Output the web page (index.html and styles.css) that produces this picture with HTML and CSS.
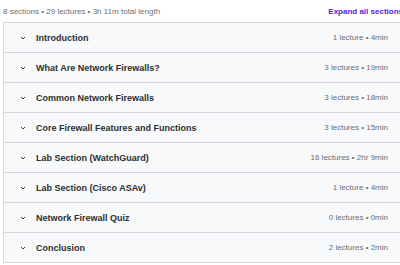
FILE: index.html
```html
<!DOCTYPE html>
<html>
<head>
<meta charset="utf-8">
<link rel="stylesheet" href="styles.css">
</head>
<body>
<div class="curriculum">
  <div class="summary">
    <span class="stats">8 sections • 29 lectures • 3h 11m total length</span>
    <span class="expand">Expand all sections</span>
  </div>
  <div class="sections">
    <div class="row"><span class="chev"><svg width="8" height="8" viewBox="0 0 8 8"><path d="M2 3 L4 5 L6 3" fill="none" stroke="#3e4143" stroke-width="1"/></svg></span><span class="title">Introduction</span><span class="meta">1 lecture • 4min</span></div>
    <div class="row"><span class="chev"><svg width="8" height="8" viewBox="0 0 8 8"><path d="M2 3 L4 5 L6 3" fill="none" stroke="#3e4143" stroke-width="1"/></svg></span><span class="title">What Are Network Firewalls?</span><span class="meta">3 lectures • 19min</span></div>
    <div class="row"><span class="chev"><svg width="8" height="8" viewBox="0 0 8 8"><path d="M2 3 L4 5 L6 3" fill="none" stroke="#3e4143" stroke-width="1"/></svg></span><span class="title">Common Network Firewalls</span><span class="meta">3 lectures • 18min</span></div>
    <div class="row"><span class="chev"><svg width="8" height="8" viewBox="0 0 8 8"><path d="M2 3 L4 5 L6 3" fill="none" stroke="#3e4143" stroke-width="1"/></svg></span><span class="title">Core Firewall Features and Functions</span><span class="meta">3 lectures • 15min</span></div>
    <div class="row"><span class="chev"><svg width="8" height="8" viewBox="0 0 8 8"><path d="M2 3 L4 5 L6 3" fill="none" stroke="#3e4143" stroke-width="1"/></svg></span><span class="title">Lab Section (WatchGuard)</span><span class="meta">16 lectures • 2hr 9min</span></div>
    <div class="row"><span class="chev"><svg width="8" height="8" viewBox="0 0 8 8"><path d="M2 3 L4 5 L6 3" fill="none" stroke="#3e4143" stroke-width="1"/></svg></span><span class="title">Lab Section (Cisco ASAv)</span><span class="meta">1 lecture • 4min</span></div>
    <div class="row"><span class="chev"><svg width="8" height="8" viewBox="0 0 8 8"><path d="M2 3 L4 5 L6 3" fill="none" stroke="#3e4143" stroke-width="1"/></svg></span><span class="title">Network Firewall Quiz</span><span class="meta">0 lectures • 0min</span></div>
    <div class="row"><span class="chev"><svg width="8" height="8" viewBox="0 0 8 8"><path d="M2 3 L4 5 L6 3" fill="none" stroke="#3e4143" stroke-width="1"/></svg></span><span class="title">Conclusion</span><span class="meta">2 lectures • 2min</span></div>
  </div>
</div>
</body>
</html>
```
FILE: styles.css
```css
html, body {
  margin: 0;
  padding: 0;
  background: #ffffff;
  overflow: hidden;
}
body {
  font-family: "Liberation Sans", Arial, sans-serif;
  color: #2d2f31;
}
.curriculum {
  width: 400px;
  margin-left: 3px;
}
.summary {
  height: 22px;
  display: flex;
  align-items: center;
  justify-content: space-between;
}
.stats {
  font-size: 8px;
  color: #6a6f73;
}
.expand {
  font-size: 8px;
  font-weight: bold;
  color: #5624d0;
}
.sections {
  border: 1px solid #d1d7dc;
}
.row {
  height: 29px;
  display: flex;
  align-items: center;
  background: #f7f9fa;
  padding: 0 14px 0 15px;
}
.row + .row {
  border-top: 1px solid #d1d7dc;
}
.chev {
  width: 8px;
  height: 8px;
  display: flex;
  margin-right: 9px;
}
.title {
  flex: 1;
  font-size: 9px;
  font-weight: bold;
  color: #2d2f31;
}
.meta {
  font-size: 8px;
  color: #6a6f73;
}
```
